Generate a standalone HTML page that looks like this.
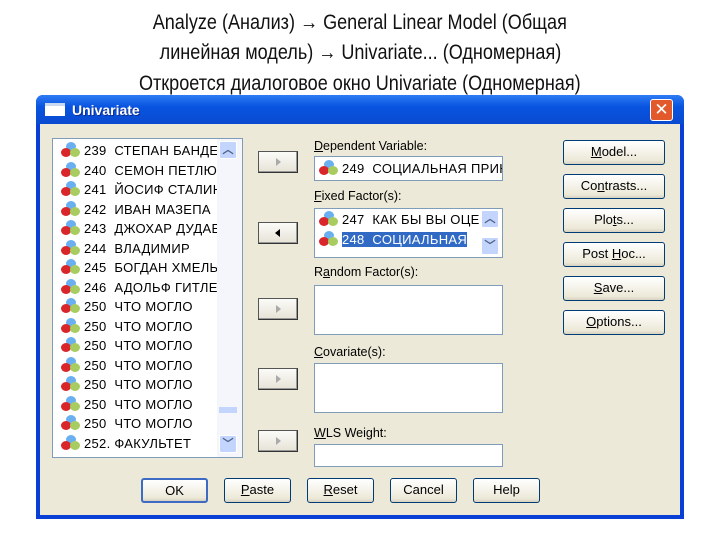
<!DOCTYPE html>
<html><head><meta charset="utf-8"><style>
*{margin:0;padding:0;box-sizing:border-box}
body{width:720px;height:540px;background:#fff;position:relative;overflow:hidden;font-family:"Liberation Sans","DejaVu Sans",sans-serif}
.h{position:absolute;left:0;width:720px;text-align:center;font-size:21px;color:#111;line-height:24px}
.h span{display:inline-block;transform:scaleX(0.86);white-space:nowrap}
.a{position:absolute}
.dlg{left:36px;top:95px;width:648px;height:424px;background:#0a3fd6;border-radius:7px 7px 0 0}
.tb{left:36px;top:95px;width:648px;height:29px;background:linear-gradient(#2f7cf5,#0854e0 40%,#0a4ad0);border-radius:7px 7px 0 0}
.body{left:40px;top:124px;width:640px;height:391px;background:#ece9d8}
.box{background:#fff;border:1px solid #7f9db9}
.btn{position:absolute;background:linear-gradient(#fff,#ece9d8 85%,#d6d0c0);border:1px solid #003c74;border-radius:3px;font-size:13px;text-align:center;line-height:22px;color:#000}
.ab{position:absolute;width:40px;height:22px;background:linear-gradient(#fbfbf8,#e6e2d6);border:1px solid #555;border-right-color:#333;border-bottom-color:#333;box-shadow:inset -1px -1px #999}
.ab i{position:absolute;left:17px;top:6px;width:0;height:0;border-top:4px solid transparent;border-bottom:4px solid transparent}
.lab{position:absolute;font-size:12.5px;color:#000}
.row{position:absolute;left:8px;height:19px;font-size:13px;line-height:19px;white-space:nowrap;color:#000;letter-spacing:0.3px}
.ic{display:inline-block;width:20px;height:16px;position:relative;vertical-align:-3px;margin-right:3px}
.ic b{position:absolute;border-radius:50%;width:10px;height:9px}
u{text-decoration:underline}
.sb{position:absolute;width:18px;height:18px;background:#c3d5fd;border:1px solid #fff;border-radius:2px;color:#4d6185;font-size:11px;text-align:center;line-height:16px;font-weight:bold}
.clip{position:absolute;overflow:hidden}
</style></head><body>
<div class="h" style="top:11px"><span>Analyze (Анализ) → General Linear Model (Общая</span></div>
<div class="h" style="top:41px"><span>линейная модель) → Univariate... (Одномерная)</span></div>
<div class="h" style="top:72px"><span>Откроется диалоговое окно Univariate (Одномерная)</span></div>

<div class="a dlg"></div>
<div class="a tb"></div>
<div class="a" style="left:45px;top:103px;width:20px;height:13px;background:#fff;border-top:3px solid #c8d8f0"></div>
<div class="a" style="left:72px;top:102px;color:#fff;font-weight:bold;font-size:14px;text-shadow:1px 1px #0a2a90">Univariate</div>
<div class="a" style="left:650px;top:99px;width:23px;height:22px;background:#e25a2c;border:1px solid #fff;border-radius:3px;color:#fff;font-weight:bold;font-size:17px;text-align:center;line-height:20px">✕</div>
<div class="a body"></div>

<!-- source list -->
<div class="a box" style="left:52px;top:138px;width:191px;height:320px;overflow:hidden">
<div class="clip" style="left:0;top:0;width:164px;height:318px"><div id="rows"></div></div>
<div class="a" style="left:164px;top:0;width:25px;height:318px;background:#f4f6fb"></div>
<div class="sb" style="left:166px;top:2px">︿</div>
<div class="a" style="left:166px;top:268px;width:18px;height:6px;background:#c3d5fd"></div>
<div class="sb" style="left:166px;top:296px">﹀</div>
</div>

<!-- arrow buttons -->
<div class="ab" style="left:258px;top:151px"><i style="border-left:5px solid #aaa"></i></div>
<div class="ab" style="left:258px;top:222px"><i style="border-right:5px solid #000;left:16px"></i></div>
<div class="ab" style="left:258px;top:298px"><i style="border-left:5px solid #aaa"></i></div>
<div class="ab" style="left:258px;top:368px"><i style="border-left:5px solid #aaa"></i></div>
<div class="ab" style="left:258px;top:430px"><i style="border-left:5px solid #aaa"></i></div>

<div class="lab" style="left:314px;top:139px"><u>D</u>ependent Variable:</div>
<div class="a box" style="left:314px;top:156px;width:189px;height:25px;overflow:hidden">
<div class="row" style="left:4px;top:2px" id="dv"></div></div>
<div class="lab" style="left:314px;top:189px"><u>F</u>ixed Factor(s):</div>
<div class="a box" style="left:314px;top:208px;width:189px;height:50px;overflow:hidden">
<div class="clip" style="left:0;top:0;width:164px;height:48px">
<div class="row" style="left:4px;top:1px" id="f1"></div>
<div class="row" style="left:4px;top:21px" id="f2"></div></div>
<div class="sb" style="left:166px;top:1px">︿</div>
<div class="sb" style="left:166px;top:28px">﹀</div>
</div>
<div class="lab" style="left:314px;top:265px">R<u>a</u>ndom Factor(s):</div>
<div class="a box" style="left:314px;top:285px;width:189px;height:50px"></div>
<div class="lab" style="left:314px;top:345px"><u>C</u>ovariate(s):</div>
<div class="a box" style="left:314px;top:363px;width:189px;height:50px"></div>
<div class="lab" style="left:314px;top:426px"><u>W</u>LS Weight:</div>
<div class="a box" style="left:314px;top:444px;width:189px;height:23px"></div>

<div class="btn" style="left:563px;top:140px;width:102px;height:25px"><u>M</u>odel...</div>
<div class="btn" style="left:563px;top:174px;width:102px;height:25px">Co<u>n</u>trasts...</div>
<div class="btn" style="left:563px;top:208px;width:102px;height:25px">Plo<u>t</u>s...</div>
<div class="btn" style="left:563px;top:242px;width:102px;height:25px">Post <u>H</u>oc...</div>
<div class="btn" style="left:563px;top:276px;width:102px;height:25px"><u>S</u>ave...</div>
<div class="btn" style="left:563px;top:310px;width:102px;height:25px"><u>O</u>ptions...</div>

<div class="btn" style="left:141px;top:478px;width:67px;height:25px;border:2px solid #3d6bc4">OK</div>
<div class="btn" style="left:224px;top:478px;width:67px;height:25px"><u>P</u>aste</div>
<div class="btn" style="left:307px;top:478px;width:67px;height:25px"><u>R</u>eset</div>
<div class="btn" style="left:390px;top:478px;width:67px;height:25px">Cancel</div>
<div class="btn" style="left:473px;top:478px;width:67px;height:25px">Help</div>

<script>
var ic='<span class="ic"><b style="left:5px;top:0;background:#6ab0f0"></b><b style="left:0;top:6px;background:#d8262a"></b><b style="left:9px;top:6px;background:#a8cc60"></b></span>';
var names=["239  СТЕПАН БАНДЕРА","240  СЕМОН ПЕТЛЮРА","241  ЙОСИФ СТАЛИН","242  ИВАН МАЗЕПА","243  ДЖОХАР ДУДАЕВ","244  ВЛАДИМИР","245  БОГДАН ХМЕЛЬНИЦКИЙ","246  АДОЛЬФ ГИТЛЕР","250  ЧТО МОГЛО","250  ЧТО МОГЛО","250  ЧТО МОГЛО","250  ЧТО МОГЛО","250  ЧТО МОГЛО","250  ЧТО МОГЛО","250  ЧТО МОГЛО","252. ФАКУЛЬТЕТ"];
var h='';for(var i=0;i<names.length;i++){h+='<div class="row" style="top:'+(2+i*19.5)+'px">'+ic+names[i].replace(/  /,'&nbsp; ')+'</div>';}
document.getElementById('rows').innerHTML=h;
document.getElementById('dv').innerHTML=ic+'249&nbsp; СОЦИАЛЬНАЯ ПРИНАДЛ';
document.getElementById('f1').innerHTML=ic+'247&nbsp; КАК БЫ ВЫ ОЦЕНИЛИ';
document.getElementById('f2').innerHTML=ic+'<span style="background:#316ac5;color:#fff">248&nbsp; СОЦИАЛЬНАЯ</span>';
</script>
</body></html>
